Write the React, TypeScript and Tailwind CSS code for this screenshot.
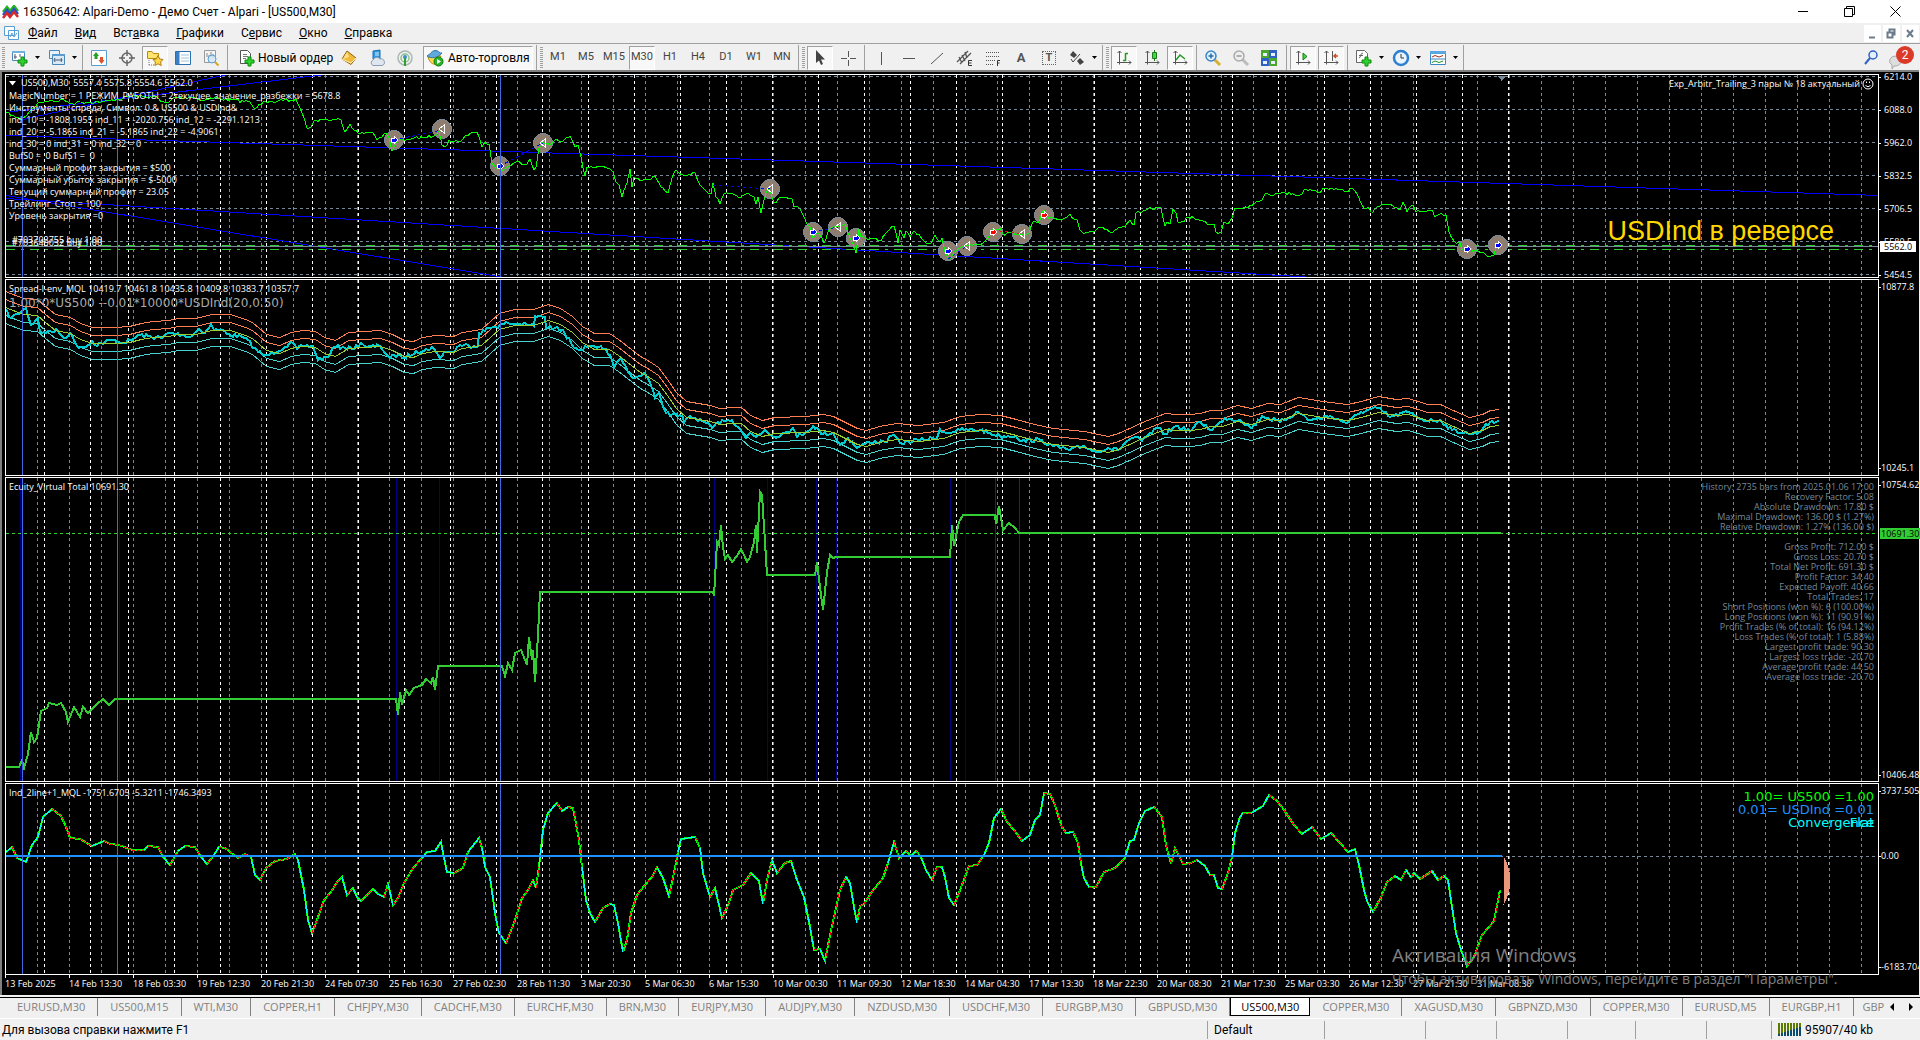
import { useState } from "react";
import type { ReactNode } from "react";
import { clsx } from "clsx";

type Point = [number, number];

const toPoints = (text: string): Point[] =>
  text
    .trim()
    .split(/\s+/)
    .map((pair) => pair.split(",").map(Number) as Point);

const toPath = (points: Point[], dy = 0) => "M" + points.map(([x, y]) => `${x} ${y + dy}`).join("L");

// Fills the gaps between the main quotes with small tick noise
const withTicks = (points: Point[], amount: number): Point[] => {
  let seed = 7;
  const random = () => {
    seed = (seed * 16807) % 2147483647;
    return seed / 2147483647 - 0.5;
  };
  const result: Point[] = [];
  points.forEach(([x, y], i) => {
    result.push([x, y]);
    const next = points[i + 1];
    if (!next) return;
    for (let step = x + 2; step < next[0] - 1; step += 2) {
      const t = (step - x) / (next[0] - x);
      result.push([step, y + (next[1] - y) * t + random() * amount]);
    }
  });
  return result;
};

const PRICE = toPoints(`
5,114 9,113 16,118 22,119 27,115 32,109 38,103 46,101 59,101 64,100 73,104 80,102 104,102 118,99 132,96 150,97 157,97 161,102 168,103 173,98 193,97 200,100 214,98 232,100 250,102
253,107 255,109 264,101 271,101 293,101 296,99 300,108 304,118 307,128 311,127 314,121 323,120 327,119 332,120 341,120 345,132 350,124 354,130 358,133 370,132 373,133 377,140 382,137
386,133 389,138 392,151 395,145 398,140 411,139 425,137 434,136 439,131 442,145 445,147 449,140 459,142 463,139 466,135 477,132 479,137 482,147 485,142 489,144 492,163 496,168 504,170
509,166 516,162 527,164 530,159 534,170 536,167 539,148 543,142 550,145 555,140 562,142 566,138 570,136 573,142 575,147 578,145 581,157 585,176 587,167 594,168 602,166 610,169 613,172
616,182 619,185 622,197 624,190 627,183 630,169 632,187 634,177 642,181 651,179 655,176 661,187 668,193 672,178 676,170 683,175 695,173 700,185 704,189 711,194 713,183 716,197 720,204
724,194 735,195 741,197 749,194 754,197 756,204 758,197 761,213 766,193 769,188 774,203 779,198 786,197 792,199 794,207 798,207 802,213 806,222 810,227 813,238 817,232 820,235 824,243
828,232 831,228 838,227 845,224 848,233 851,240 856,253 859,229 861,237 867,239 876,238 881,241 886,233 894,226 898,243 900,230 904,238 906,231 910,237 913,232 919,234 926,243 930,244
935,235 940,242 942,238 945,252 950,259 954,252 960,248 969,245 983,243 986,240 992,230 1000,228 1003,234 1013,233 1022,234 1029,233 1033,222 1038,223 1044,210 1047,217 1052,217
1061,220 1067,217 1070,214 1074,219 1077,220 1080,230 1084,234 1086,232 1095,231 1099,227 1113,232 1119,227 1125,227 1130,220 1134,225 1136,213 1141,213 1148,209 1161,208 1165,226
1167,222 1170,224 1173,209 1176,213 1178,222 1184,222 1186,218 1194,218 1203,221 1208,225 1214,224 1216,232 1221,232 1224,222 1228,224 1232,218 1235,208 1248,208 1255,203 1262,200
1265,194 1273,196 1276,193 1285,193 1300,195 1306,189 1314,190 1319,193 1323,188 1332,188 1344,191 1353,189 1359,198 1364,208 1368,207 1371,212 1380,206 1387,204 1394,207 1400,210
1403,202 1407,212 1413,205 1416,212 1432,210 1435,217 1441,213 1446,215 1449,232 1454,241 1460,243 1462,250 1469,247 1473,252 1478,251 1484,253 1488,257 1494,255 1496,247 1498,243`);

const ENVELOPE = toPoints(`
5,307 23,314 37,315 45,322 55,330 70,333 80,339 92,343 115,343 129,342 141,339 153,337 168,336 178,334 196,334 211,330 230,330 245,335 252,338 266,350 279,353 291,348 303,346 315,347
324,353 335,356 348,348 380,346 392,350 404,356 413,357 422,353 435,351 453,352 462,348 481,345 490,337 499,329 514,325 533,325 548,320 560,324 572,332 582,342 594,349 609,349 618,355
631,365 640,372 649,377 658,383 667,395 676,408 686,417 710,421 719,424 732,423 741,423 750,431 762,436 774,433 805,432 823,430 833,432 845,438 857,444 866,446 879,442 897,439 918,441
943,438 960,432 980,430 1000,431 1016,435 1034,440 1053,444 1084,447 1098,450 1108,452 1118,449 1127,445 1142,438 1157,432 1165,429 1176,430 1190,430 1200,429 1210,426 1222,426 1237,421
1251,424 1267,419 1280,420 1298,413 1322,417 1347,420 1361,417 1378,412 1396,415 1408,414 1427,420 1440,420 1455,427 1469,433 1482,430 1490,426 1499,425`);

const SPREAD = toPoints(`
5,310 11,318 18,314 26,308 31,325 38,318 40,332 58,331 64,338 70,333 77,346 86,347 92,341 95,345 113,340 122,343 132,340 138,335 162,338 168,333 184,335 190,337 199,329 205,333 211,324
214,330 223,330 227,334 242,337 248,340 254,348 263,355 268,355 285,347 293,343 297,349 303,346 313,346 318,360 328,357 334,347 343,347 352,349 361,343 367,347 380,346 390,358 398,355
404,358 416,351 422,352 432,347 440,358 444,352 453,352 460,345 478,346 479,333 490,328 508,323 530,325 534,326 535,316 545,317 546,328 557,327 563,330 572,345 579,350 588,347 597,348
606,349 612,360 614,368 621,358 628,372 635,378 644,373 649,380 655,398 659,393 666,413 683,417 684,423 690,416 704,422 712,428 722,420 732,420 741,430 746,438 750,433 756,437 765,430
774,437 784,433 793,428 797,437 805,433 813,426 823,434 833,433 840,445 848,438 857,448 869,442 885,442 894,435 900,443 918,440 937,438 940,429 946,433 960,430 980,430 1000,436
1016,436 1022,441 1040,440 1053,446 1070,450 1084,446 1096,452 1108,448 1118,450 1127,441 1135,437 1142,441 1157,428 1165,434 1176,426 1190,431 1200,422 1212,430 1225,418 1240,420
1252,428 1262,416 1280,422 1298,412 1310,420 1330,416 1347,423 1361,412 1378,408 1390,417 1408,412 1427,421 1440,420 1452,430 1469,434 1480,432 1486,424 1499,421`);

const EQUITY = toPoints(`
5,767 19,767 22,760 24,768 28,754 31,732 34,742 37,738 41,711 47,708 49,703 57,705 61,703 66,712 68,722 74,707 80,717 83,707 88,713 98,703 103,699 109,705 115,699 396,699 398,715 400,692
402,705 406,690 409,695 414,688 422,685 426,679 431,683 433,677 435,690 438,666 502,666 505,676 508,663 512,670 515,653 521,650 527,665 529,637 532,660 533,650 535,682 538,635 540,592
713,592 714,596 717,542 719,545 721,525 723,547 725,559 728,555 732,562 737,556 741,549 744,555 747,562 750,557 754,542 756,525 757,553 760,492 762,495 765,542 767,575 815,575 817,562
820,587 823,610 827,572 830,555 833,558 836,557 950,557 952,525 954,546 959,522 963,515 995,515 996,524 999,506 1003,530 1009,523 1015,528 1019,533 1501,533`);

const OSCILLATOR = toPoints(`
5,853 12,847 17,858 26,862 32,845 38,837 43,817 52,809 61,816 66,827 70,838 80,839 92,846 104,841 110,844 119,845 132,850 144,850 148,846 158,847 163,857 170,865 178,851 185,846 195,847
201,857 207,864 214,855 219,847 225,848 238,858 245,854 251,857 255,875 260,880 266,868 275,861 287,859 295,854 298,860 304,890 308,920 312,933 317,920 324,900 331,892 337,882 342,877
347,895 353,888 357,897 361,901 369,893 373,889 378,894 384,897 388,884 393,905 398,898 404,883 413,868 422,858 427,852 435,851 441,842 447,872 454,873 463,868 468,852 479,838 482,848
485,867 490,877 495,913 499,933 506,943 514,923 522,898 528,890 533,880 536,888 539,867 543,830 548,813 557,803 562,811 568,807 573,808 579,840 582,867 586,900 590,913 595,922 603,908
610,904 614,905 618,923 623,952 627,940 631,913 637,895 644,886 652,877 657,867 663,878 669,896 674,873 678,852 681,839 695,837 700,848 703,873 710,897 715,888 722,918 729,903 733,890
743,885 751,873 759,881 763,904 767,880 772,860 777,873 785,863 791,861 797,880 804,897 810,927 814,950 820,949 825,961 829,940 834,917 840,890 846,877 850,883 854,907 857,923 860,906
864,904 871,893 883,878 888,863 894,842 899,858 906,851 911,856 916,851 921,857 926,870 932,880 937,867 942,867 945,877 949,898 954,905 959,893 965,877 969,866 977,865 984,855 989,843
994,818 1001,809 1007,822 1014,830 1022,841 1030,835 1035,820 1040,815 1044,793 1050,794 1055,805 1061,825 1066,833 1073,832 1078,843 1081,863 1084,878 1089,887 1096,887 1104,872
1115,868 1125,858 1130,841 1134,840 1139,823 1145,811 1154,807 1162,817 1166,845 1171,864 1175,848 1183,864 1191,863 1197,860 1205,866 1210,875 1214,875 1218,888 1222,889 1228,873
1232,857 1235,833 1240,817 1243,813 1251,813 1263,806 1269,795 1277,801 1284,810 1294,825 1302,834 1312,827 1321,839 1331,833 1340,843 1348,852 1355,849 1359,865 1364,890 1367,901
1373,912 1381,897 1387,882 1395,876 1401,880 1406,870 1411,877 1414,873 1420,879 1432,871 1438,880 1444,876 1448,880 1452,907 1456,933 1461,950 1467,966 1474,957 1482,935 1494,921
1500,890`);

const ZERO = 856;

const range = (count: number) => Array.from({ length: count }, (_, i) => i);

const GRID_X = range(120).map((i) => 37 + 32 * i);
const DAY_X = [44, 90, ...range(31).map((i) => 128 + 46 * i)];
const MARKED_X = [22, 117, 500];

/* ---------- Chart panels ---------- */

type PanelProps = {
  className: string;
  top: number;
  grid?: number[];
  scale: ReactNode;
  drawing: ReactNode;
  children?: ReactNode;
};

function Panel({ className, top, grid = [], scale, drawing, children }: PanelProps) {
  return (
    <section className={clsx("flex shrink-0", className)}>
      <div className="relative min-w-0 flex-1 overflow-hidden border border-white">
        <svg className="absolute inset-0 size-full" fill="none" shapeRendering="crispEdges" aria-hidden="true">
          <g transform={`translate(-5.5 ${-top - 0.5})`}>
            <g stroke="#778899" strokeDasharray="3 3">
              {GRID_X.map((x) => (
                <path key={x} d={`M${x} ${top}V1200`} />
              ))}
              {grid.map((y) => (
                <path key={y} d={`M5 ${y}H4000`} />
              ))}
            </g>
            <g stroke="#fff" strokeDasharray="3 3">
              {DAY_X.map((x) => (
                <path key={x} d={`M${x} ${top}V1200`} />
              ))}
            </g>
            {drawing}
            <g stroke="#4169e1">
              {MARKED_X.map((x) => (
                <path key={x} d={`M${x} ${top}V1200`} />
              ))}
            </g>
          </g>
        </svg>
        {children}
      </div>
      <div className="relative w-10 shrink-0">{scale}</div>
    </section>
  );
}

function Label({ y, children }: { y: number; children: ReactNode }) {
  return (
    <div className="absolute left-0 flex h-3 items-center leading-3" style={{ top: y - 6 }}>
      <span className="h-px w-0.5 bg-white" />
      <span className="whitespace-nowrap">{children}</span>
    </div>
  );
}

type Marker = [number, number, "buy" | "sell" | "close"];

const MARKERS: Marker[] = [
  [394, 140, "buy"],
  [442, 129, "close"],
  [500, 166, "buy"],
  [543, 143, "close"],
  [770, 189, "close"],
  [813, 232, "buy"],
  [838, 227, "close"],
  [856, 238, "buy"],
  [948, 251, "buy"],
  [967, 246, "close"],
  [993, 232, "sell"],
  [1022, 234, "close"],
  [1044, 215, "sell"],
  [1467, 249, "buy"],
  [1498, 245, "buy"],
];

const COMMENT = [
  "MagicNumber = 1 РЕЖИМ_РАБОТЫ = 2текущее_значение_разбежки = 5678.8",
  "Инструменты спреда, Символ: 0 & US500 & USDInd&",
  "ind_10 = -1808.1955 ind_11 = -2020.756 ind_12 = -2291.1213",
  "ind_20 = -5.1865 ind_21 = -5.1865 ind_22 = -4.9061",
  "ind_30 = 0 ind_31 = 0 ind_32 = 0",
  "BufS0 =  0 BufS1 =  0",
  "Суммарный профит закрытия = $500",
  "Суммарный убыток закрытия = $-5000",
  "Текущий суммарный профит = 23.05",
  "Трейлинг_Стоп = 100",
  "Уровень закрытия =0",
];

function PricePanel() {
  const levels = ["6214.0", "6088.0", "5962.0", "5832.5", "5706.5", "5580.5", "5454.5"];

  return (
    <Panel
      className="basis-[204px]"
      top={74}
      grid={levels.map((_, i) => 76 + 33 * i)}
      scale={
        <>
          {levels.map((level, i) => (
            <Label key={level} y={3 + 33 * i}>
              <span className="pl-[3px]">{level}</span>
            </Label>
          ))}
          <div className="absolute top-[167px] left-px h-[11px] w-9 bg-white pl-1 leading-[11px] text-black">5562.0</div>
        </>
      }
      drawing={
        <>
          <g stroke="#0000ff">
            <path d="M5 112L325 74M22 119L227 74" />
            <path d="M5 135L1880 195" />
            <path d="M5 198L1313 277" />
            <path d="M5 195L505 277" />
          </g>
          <path d="M5 246H4000" stroke="#778899" />
          <path d="M5 245H4000M5 249H4000" stroke="#32cd32" strokeDasharray="9 6 3 6" />
          <g transform="translate(-.5 -.5)">
            {MARKERS.map(([x, y]) => (
              <circle key={x} cx={x} cy={y} r="9.5" fill="#8f7d70" stroke="#778899" />
            ))}
            <path d={toPath(withTicks(PRICE, 3))} stroke="#00ff00" />
            <path
              d="M394 140L442 130M500 166L543 143M713 185L770 189M813 232L838 227M948 259L967 246"
              stroke="#0000ff"
              strokeDasharray="3 3"
            />
            <path d="M993 230L1022 234" stroke="#ff0000" strokeDasharray="3 3" />
            {MARKERS.map(([x, y, kind]) =>
              kind === "close" ? (
                <path key={x} d={`M${x - 3} ${y}L${x + 2} ${y - 4}V${y + 4}Z`} stroke="#fff" />
              ) : (
                <path
                  key={x}
                  d={`M${x - 3} ${y - 2}H${x}V${y - 4}L${x + 4} ${y}L${x} ${y + 4}V${y + 2}H${x - 3}Z`}
                  fill={kind === "buy" ? "#0000ff" : "#ff0000"}
                  stroke="#fff"
                />
              )
            )}
          </g>
          <path d="M1497 75H1506L1501 80Z" fill="#778899" />
        </>
      }
    >
      <div className="absolute top-0.5 left-0.5 flex h-3 items-center gap-1 leading-3 whitespace-pre">
        <svg width="9" height="5" aria-hidden="true">
          <path d="M1 0H8L4.500 4.500Z" fill="#fff" />
        </svg>
        <span>US500,M30  5557.4 5575.8 5554.6 5562.0</span>
      </div>
      <div className="absolute top-[15px] left-[3px] leading-3 whitespace-pre">
        {COMMENT.map((line) => (
          <p key={line}>{line}</p>
        ))}
      </div>
      <div className="absolute top-[159px] left-1.5 leading-3">#703702755 buy 1.00</div>
      <div className="absolute top-[162px] left-1.5 leading-3">#703640032 buy 1.00</div>
      <div className="absolute top-[3px] right-1 flex items-center gap-0.5 leading-3">
        <span>Exp_Arbitr_Trailing_3 пары № 18 актуальный</span>
        <svg width="12" height="12" fill="none" stroke="#fff" aria-hidden="true">
          <circle cx="6" cy="6" r="5" />
          <path d="M3.500 7.500Q6 10 8.500 7.500M4.500 3.500V5M7.500 3.500V5" />
        </svg>
      </div>
      <div className="absolute right-11 top-[142px] font-['Liberation_Sans'] text-[27px] leading-7 whitespace-nowrap text-[#ffd700]">
        USDInd в реверсе
      </div>
    </Panel>
  );
}

function SpreadPanel() {
  return (
    <Panel
      className="basis-[197px]"
      top={279}
      scale={
        <>
          <Label y={8}>10877.8</Label>
          <Label y={189}>10245.1</Label>
        </>
      }
      drawing={
        <>
          <path d={toPath(ENVELOPE, -16)} stroke="#ff7f50" />
          <path d={toPath(ENVELOPE, -8)} stroke="#ff7f50" />
          <path d={toPath(ENVELOPE, 8)} stroke="#48d1cc" />
          <path d={toPath(ENVELOPE, 16)} stroke="#48d1cc" />
          <path d={toPath(withTicks(SPREAD, 4))} stroke="#00ced1" strokeWidth="2" transform="translate(-.5 -.5)" />
          <path d={toPath(ENVELOPE)} stroke="#9acd32" />
        </>
      }
    >
      <div className="absolute top-[3px] left-[3px] leading-3">
        Spread-I-env_MQL 10419.7 10461.8 10435.8 10409.8 10383.7 10357.7
      </div>
      <div className="absolute top-4 left-[3px] font-['DejaVu_Sans'] text-xs leading-[14px] text-[#a9a9a9]">
        1.00*0*US500 --0.01*10000*USDInd(20,0.50)
      </div>
    </Panel>
  );
}

const REPORT = [
  "History: 2735 bars from 2025.01.06 17:00",
  "Recovery Factor: 5.08",
  "Absolute Drawdown: 17.80 $",
  "Maximal Drawdown: 136.00 $ (1.27%)",
  "Relative Drawdown: 1.27% (136.00 $)",
  "",
  "Gross Profit: 712.00 $",
  "Gross Loss: 20.70 $",
  "Total Net Profit: 691.30 $",
  "Profit Factor: 34.40",
  "Expected Payoff: 40.66",
  "Total Trades: 17",
  "Short Positions (won %): 6 (100.00%)",
  "Long Positions (won %): 11 (90.91%)",
  "Profit Trades (% of total): 16 (94.12%)",
  "Loss Trades (% of total): 1 (5.88%)",
  "Largest profit trade: 90.30",
  "Largest loss trade: -20.70",
  "Average profit trade: 44.50",
  "Average loss trade: -20.70",
];

function EquityPanel() {
  return (
    <Panel
      className="grow basis-[305px]"
      top={477}
      scale={
        <>
          <Label y={8}>10754.62</Label>
          <Label y={298}>10406.48</Label>
          <div className="absolute top-[51px] left-px h-[11px] w-10 bg-[#32cd32] pl-px leading-[11px] text-black">10691.30</div>
        </>
      }
      drawing={
        <>
          <g stroke="#000080">
            {[20, 119, 396, 439, 714, 767, 816, 836, 950, 965].map((x) => (
              <path key={x} d={`M${x} 477V790`} />
            ))}
          </g>
          <path d="M995 477V790M1019 477V790" stroke="#8b0000" />
          <path d="M5 533H4000" stroke="#32cd32" strokeDasharray="3 3" />
          <path d={toPath(EQUITY)} stroke="#32cd32" strokeWidth="2" transform="translate(-.5 -.5)" />
        </>
      }
    >
      <div className="absolute top-[3px] left-[3px] leading-3">Ecuity_Virtual Total 10691.30</div>
      <div className="absolute top-1 right-1 text-right text-[#778899]">
        {REPORT.map((line, i) => (
          <p key={i} className="h-2.5 leading-[10px]">
            {line}
          </p>
        ))}
      </div>
    </Panel>
  );
}

function OscillatorPanel() {
  // Red while the line returns to zero, aqua while it moves away
  let away = "";
  let back = "";
  OSCILLATOR.slice(1).forEach(([x, y], i) => {
    const [px, py] = OSCILLATOR[i];
    const segment = `M${px} ${py}L${x} ${y}`;
    if (Math.abs(y - ZERO) > Math.abs(py - ZERO)) away += segment;
    else back += segment;
  });

  return (
    <Panel
      className="basis-[192px]"
      top={783}
      grid={[ZERO]}
      scale={
        <>
          <Label y={8}>3737.505</Label>
          <Label y={73}>0.00</Label>
          <Label y={184}>-6183.704</Label>
        </>
      }
      drawing={
        <>
          <path d="M1503 856Q1517 880 1503 904Z" fill="#e9967a" />
          <g transform="translate(-.5 -.5)">
            <path d={toPath(OSCILLATOR)} stroke="#00ff00" strokeWidth="2" />
            <path d={away} stroke="#00ffff" />
            <path d={back} stroke="#ff0000" strokeDasharray="3 2" />
            <path d="M5 856H1502" stroke="#1e90ff" strokeWidth="2" />
          </g>
        </>
      }
    >
      <div className="absolute top-[3px] left-[3px] leading-3">Ind_2line+1_MQL -1751.6705 -5.3211 -1746.3493</div>
      <div className="absolute top-1.5 right-1 text-right font-['DejaVu_Sans'] text-[13px] leading-[13px]">
        <p className="text-[#00ff00]">1.00= US500 =1.00</p>
        <p className="text-[#1e90ff]">0.01= USDInd =0.01</p>
        <p className="text-[#00ffff]">Convergence</p>
        <p className="absolute right-0 bottom-0 text-[#00ffff]">Flat</p>
      </div>
    </Panel>
  );
}

const TIMES = [
  "13 Feb 2025",
  "14 Feb 13:30",
  "18 Feb 03:30",
  "19 Feb 12:30",
  "20 Feb 21:30",
  "24 Feb 07:30",
  "25 Feb 16:30",
  "27 Feb 02:30",
  "28 Feb 11:30",
  "3 Mar 20:30",
  "5 Mar 06:30",
  "6 Mar 15:30",
  "10 Mar 00:30",
  "11 Mar 09:30",
  "12 Mar 18:30",
  "14 Mar 04:30",
  "17 Mar 13:30",
  "18 Mar 22:30",
  "20 Mar 08:30",
  "21 Mar 17:30",
  "25 Mar 03:30",
  "26 Mar 12:30",
  "27 Mar 21:30",
  "31 Mar 08:30",
];

function TimeAxis() {
  return (
    <div className="-mt-px flex h-5 overflow-hidden">
      {TIMES.map((time) => (
        <div key={time} className="w-16 shrink-0 whitespace-nowrap">
          <div className="h-[3px] w-px bg-white" />
          <div className="leading-3">{time}</div>
        </div>
      ))}
    </div>
  );
}

/* ---------- Toolbar ---------- */

function Icon({ children }: { children: ReactNode }) {
  return (
    <svg width="18" height="18" viewBox="0 0 18 18" fill="none" className="shrink-0" aria-hidden="true">
      {children}
    </svg>
  );
}

const PLUS = <path d="M10 8H13V11H16V14H13V17H10V14H7V11H10Z" fill="#2fd12f" stroke="#0a8a0a" />;

const AXES = <path d="M4.500 2V15.500M2 13.500H16M2.500 4L4.500 2L6.500 4M14 11.500L16 13.500L14 15.500" stroke="#555" />;

const icons = {
  newChart: (
    <Icon>
      <path d="M1.500 2.500H13.500V11.500H1.500Z" fill="#fff" stroke="#4a86b8" />
      <path d="M1 3H14" stroke="#6fb1dd" strokeWidth="2" />
      <path d="M4 5V10M3 8H6M9 5V8" stroke="#557" />
      {PLUS}
    </Icon>
  ),
  profiles: (
    <Icon>
      <path d="M1.500 1.500H11.500V9.500H1.500Z" fill="#e6f1fa" stroke="#4a86b8" />
      <path d="M4.500 5.500H16.500V15.500H4.500Z" fill="#dbe9f5" stroke="#4a86b8" />
      <path d="M4 6H17" stroke="#5b9bd0" strokeWidth="2" />
      <path d="M7 11H14M7 9L6 11L7 13M13 9L14 11L13 13" stroke="#456" />
    </Icon>
  ),
  market: (
    <Icon>
      <path d="M1.500 1.500H16.500V16.500H1.500Z" fill="#fff" stroke="#5a9fd4" />
      <path d="M6 3L9 7H7.500V10H4.500V7H3Z" fill="#22a022" />
      <path d="M11.500 15L8.500 11H10V8H13V11H14.500Z" fill="#e0522a" />
    </Icon>
  ),
  target: (
    <Icon>
      <circle cx="9" cy="9" r="5" stroke="#666" strokeWidth="1.500" />
      <path d="M9 1V7M9 11V17M1 9H7M11 9H17" stroke="#666" strokeWidth="1.500" />
    </Icon>
  ),
  navigator: (
    <Icon>
      <path d="M1.500 2.500H6L7.500 4.500H12.500V9.500H1.500Z" fill="#ffe46b" stroke="#b88a10" />
      <path d="M3 11V16M3 16H8" stroke="#777" strokeDasharray="1 1" />
      <path d="M12 6.500L13.700 10L17 10.500L14.600 13L15.200 16.500L12 14.800L8.800 16.500L9.400 13L7 10.500L10.300 10Z" fill="#ffd84a" stroke="#b07d10" />
    </Icon>
  ),
  terminal: (
    <Icon>
      <path d="M1.500 2.500H16.500V15.500H1.500Z" fill="#fff" stroke="#2b6fb0" />
      <path d="M2 3H5.500V15H2Z" fill="#3b7fc4" />
      <path d="M7 6H15M7 9H15M7 12H15" stroke="#9ec3e0" />
    </Icon>
  ),
  tester: (
    <Icon>
      <path d="M2.500 1.500H13.500V13.500H2.500Z" fill="#f4f4f4" stroke="#999" />
      <path d="M5 4V8M7 6V10M9 3V8M11 5V9" stroke="#888" />
      <circle cx="10" cy="10" r="4" fill="#cfe6f8" fillOpacity=".8" stroke="#5a9fd4" />
      <path d="M13 13L16.500 16.500" stroke="#d9a520" strokeWidth="2" />
    </Icon>
  ),
  order: (
    <Icon>
      <path d="M2.500 1.500H9.500L12.500 4.500V14.500H2.500Z" fill="#fff" stroke="#555" />
      <path d="M5 5.500H9M5 7.500H10M5 9.500H8" stroke="#777" />
      {PLUS}
    </Icon>
  ),
  editor: (
    <Icon>
      <path d="M7 2L16 9L11 15.500L2 10Z" fill="#f0b93a" stroke="#94650c" />
      <path d="M2 10L11 14L16 9" stroke="#fff3c0" />
      <path d="M7 3L9 8L3 10" fill="#ffe08a" />
    </Icon>
  ),
  hosting: (
    <Icon>
      <path d="M5 2L12 1V10H5Z" fill="#2f9ae0" stroke="#1a6fb0" />
      <path d="M7 4H11M7 6H11" stroke="#d4edff" />
      <path d="M5 16.500A3 3 0 0 1 5 11A4 4 0 0 1 12 10A3 3 0 0 1 14 16.500Z" fill="#dfe6ef" stroke="#8a9bb5" />
    </Icon>
  ),
  signals: (
    <Icon>
      <circle cx="9" cy="9" r="7" stroke="#a9b8b0" strokeWidth="1.500" />
      <circle cx="9" cy="9" r="4" stroke="#8fc08f" strokeWidth="1.500" />
      <circle cx="9" cy="8" r="2" fill="#3d8fd1" />
      <path d="M9 9V17" stroke="#2fa02f" strokeWidth="2" />
    </Icon>
  ),
  expert: (
    <Icon>
      <path d="M2 8C4 15 8 16 12 15L15 7Z" fill="#ffd84a" stroke="#b88a10" />
      <path d="M1 7C5 10 12 9 16 4C13 5 13 1 9 1.500C5 2 5 5 1 7Z" fill="#5fa9dc" stroke="#2f76ac" />
      <circle cx="12.500" cy="12.500" r="4.500" fill="#27b327" stroke="#0e7a0e" />
      <path d="M11 10L15 12.500L11 15Z" fill="#fff" />
    </Icon>
  ),
  cursor: (
    <Icon>
      <path d="M5 1V14L8 11.500L10 16L12 15L10 10.500H14Z" fill="#444" />
    </Icon>
  ),
  crosshair: (
    <Icon>
      <path d="M9.500 2V8M9.500 11V17M2 9.500H8M11 9.500H17" stroke="#555" />
    </Icon>
  ),
  vertical: (
    <Icon>
      <path d="M9.500 3V16" stroke="#555" />
    </Icon>
  ),
  horizontal: (
    <Icon>
      <path d="M3 9.500H15" stroke="#555" />
    </Icon>
  ),
  trend: (
    <Icon>
      <path d="M3 15L15 4" stroke="#555" />
    </Icon>
  ),
  channel: (
    <Icon>
      <path d="M1 13L12 2M4 15L15 4M3 8L6 14M6 6L9 12M9 3L11 9" stroke="#555" strokeWidth="1.300" />
      <path d="M16 11.500H12.500V16.500H16M12.500 14H15.500" stroke="#333" />
    </Icon>
  ),
  fibo: (
    <Icon>
      <path d="M2 3.500H16M2 7.500H16M2 11.500H11M2 15.500H10" stroke="#555" strokeDasharray="1 1" />
      <path d="M16 11.500H13.500V17M13.500 14H15.500" stroke="#333" />
    </Icon>
  ),
  letter: <span className="text-[13px] font-bold text-[#555]">A</span>,
  label: <span className="border border-dotted border-[#666] px-[3px] text-[11px] leading-3 font-bold text-[#555]">T</span>,
  arrows: (
    <Icon>
      <path d="M5 2L9 6L6 9L2 6Z" fill="#444" />
      <path d="M12 9L16 13L12 16L9 12Z" fill="#444" />
      <path d="M3 10L5 13L12 5" stroke="#444" />
    </Icon>
  ),
  bars: (
    <Icon>
      {AXES}
      <path d="M10.500 4V12M10.500 4.500H13M8 11.500H10.500" stroke="#1f9a1f" strokeWidth="1.500" />
    </Icon>
  ),
  candles: (
    <Icon>
      {AXES}
      <path d="M11.500 1V12" stroke="#1f7a1f" />
      <path d="M9.500 3.500H13.500V9.500H9.500Z" fill="#3fd83f" stroke="#1f7a1f" />
    </Icon>
  ),
  line: (
    <Icon>
      {AXES}
      <path d="M5 11L9 6L14 10" stroke="#1f9a1f" strokeWidth="1.500" />
    </Icon>
  ),
  zoomIn: (
    <Icon>
      <path d="M10 10L16 16" stroke="#d9b030" strokeWidth="3" />
      <circle cx="7" cy="7" r="5" fill="#dff0ff" stroke="#3a86c8" strokeWidth="1.500" />
      <path d="M7 4.500V9.500M4.500 7H9.500" stroke="#2a6aa8" strokeWidth="1.500" />
    </Icon>
  ),
  zoomOut: (
    <Icon>
      <path d="M10 10L16 16" stroke="#bbb" strokeWidth="3" />
      <circle cx="7" cy="7" r="5" fill="#eee" stroke="#aaa" strokeWidth="1.500" />
      <path d="M4.500 7H9.500" stroke="#999" strokeWidth="1.500" />
    </Icon>
  ),
  tile: (
    <Icon>
      <path d="M1 1H9V9H1ZM9 9H17V17H9Z" fill="#4ba82e" />
      <path d="M9 1H17V9H9ZM1 9H9V17H1Z" fill="#2f62c4" />
      <path d="M3 4H7V7H3ZM11 4H15V7H11ZM3 12H7V15H3ZM11 12H15V15H11Z" fill="#e8f0ff" />
    </Icon>
  ),
  scroll: (
    <Icon>
      {AXES}
      <path d="M9 4L13 7.500L9 11Z" fill="#3fd83f" stroke="#1f7a1f" />
    </Icon>
  ),
  shift: (
    <Icon>
      {AXES}
      <path d="M10.500 2V12" stroke="#555" />
      <path d="M16 7H12M14 5L12 7L14 9" stroke="#c8501e" strokeWidth="1.500" />
    </Icon>
  ),
  indicators: (
    <Icon>
      <path d="M1.500 1.500H9.500L12.500 4.500V13.500H1.500Z" fill="#fff" stroke="#666" />
      <path d="M4 9C6 9 5 4 8 4M4 6.500H8" stroke="#666" />
      {PLUS}
    </Icon>
  ),
  periods: (
    <Icon>
      <circle cx="9" cy="9" r="7" fill="#eaf5ff" stroke="#2f7fd0" strokeWidth="2.500" />
      <path d="M9 5V9H12" stroke="#333" />
    </Icon>
  ),
  templates: (
    <Icon>
      <path d="M1.500 2.500H16.500V15.500H1.500Z" fill="#fff" stroke="#3a86c8" />
      <path d="M1 3.500H17" stroke="#5aa6e0" strokeWidth="3" />
      <path d="M3 8L6 6.500L10 8L14 6.500" stroke="#a03020" />
      <path d="M2 10H16" stroke="#3a86c8" />
      <path d="M3 13.500L6 12L10 13.500L14 12" stroke="#1f9a1f" />
    </Icon>
  ),
};

type ToolProps = { icon: ReactNode; label: string; pressed?: boolean; menu?: boolean };

function Tool({ icon, label, pressed, menu }: ToolProps) {
  return (
    <button type="button" aria-label={label} className="flex h-6 shrink-0 items-center">
      <span
        className={clsx(
          "mx-px flex h-6 w-[26px] items-center justify-center",
          pressed && "border border-white border-t-[#a0a0a0] border-l-[#a0a0a0] bg-[#f8f8f8]"
        )}
      >
        {icon}
      </span>
      {menu && (
        <svg width="9" height="4" aria-hidden="true">
          <path d="M1 0H6L3.500 3Z" fill="#000" />
        </svg>
      )}
    </button>
  );
}

const Divider = () => <div className="mx-0.5 h-[26px] w-px shrink-0 bg-[#a0a0a0]" />;

const Grip = () => (
  <div className="mx-px h-[22px] w-[3px] shrink-0 bg-[repeating-linear-gradient(#a0a0a0_0_1px,transparent_1px_2px)]" />
);

function Toolbar() {
  const [frame, setFrame] = useState("M30");

  return (
    <div className="flex h-[27px] items-center overflow-hidden border-t border-[#a0a0a0] bg-[#f0f0f0] pt-px pl-px">
      <Grip />
      <Tool icon={icons.newChart} label="Новый график" menu />
      <Tool icon={icons.profiles} label="Профили" menu />
      <Divider />
      <Tool icon={icons.market} label="Обзор рынка" />
      <Tool icon={icons.target} label="Окно данных" />
      <Tool icon={icons.navigator} label="Навигатор" pressed />
      <Tool icon={icons.terminal} label="Терминал" />
      <Tool icon={icons.tester} label="Тестер стратегий" />
      <Divider />
      <button type="button" className="flex h-6 w-[105px] shrink-0 items-center gap-0.5 pl-2 text-xs whitespace-nowrap">
        {icons.order}
        Новый ордер
      </button>
      <Tool icon={icons.editor} label="Редактор" />
      <Tool icon={icons.hosting} label="Хостинг" />
      <Tool icon={icons.signals} label="Сигналы" />
      <button
        type="button"
        className="mr-px ml-1 flex h-6 w-[110px] shrink-0 items-center gap-1 border border-white border-t-[#a0a0a0] border-l-[#a0a0a0] bg-[#f8f8f8] pl-0.5 text-xs whitespace-nowrap"
      >
        {icons.expert}
        Авто-торговля
      </button>
      <Divider />
      <Grip />
      {["M1", "M5", "M15", "M30", "H1", "H4", "D1", "W1", "MN"].map((name) => (
        <button
          key={name}
          type="button"
          onClick={() => setFrame(name)}
          className={clsx(
            "mx-px h-6 w-[26px] shrink-0 text-center text-[11px] text-[#444]",
            name === frame && "border border-white border-t-[#a0a0a0] border-l-[#a0a0a0] bg-[#f8f8f8]"
          )}
        >
          {name}
        </button>
      ))}
      <Divider />
      <Grip />
      <Tool icon={icons.cursor} label="Курсор" pressed />
      <Tool icon={icons.crosshair} label="Перекрестие" />
      <Divider />
      <Tool icon={icons.vertical} label="Вертикальная линия" />
      <Tool icon={icons.horizontal} label="Горизонтальная линия" />
      <Tool icon={icons.trend} label="Трендовая линия" />
      <Tool icon={icons.channel} label="Канал" />
      <Tool icon={icons.fibo} label="Фибоначчи" />
      <Tool icon={icons.letter} label="Текст" />
      <Tool icon={icons.label} label="Метка" />
      <Tool icon={icons.arrows} label="Стрелки" menu />
      <Divider />
      <Grip />
      <Tool icon={icons.bars} label="Бары" pressed />
      <Tool icon={icons.candles} label="Свечи" />
      <Tool icon={icons.line} label="Линия" pressed />
      <Divider />
      <Tool icon={icons.zoomIn} label="Увеличить" />
      <Tool icon={icons.zoomOut} label="Уменьшить" />
      <Tool icon={icons.tile} label="Окна мозаикой" />
      <div className="ml-px flex shrink-0 items-center">
        <Divider />
        <Tool icon={icons.scroll} label="Автопрокрутка" pressed />
        <Tool icon={icons.shift} label="Сдвиг графика" pressed />
        <Divider />
        <Tool icon={icons.indicators} label="Индикаторы" menu />
        <Tool icon={icons.periods} label="Периоды" menu />
        <Tool icon={icons.templates} label="Шаблоны" menu />
        <Divider />
      </div>
      <button type="button" aria-label="Поиск" className="mr-2 ml-auto shrink-0">
        <Icon>
          <circle cx="11" cy="6" r="4" fill="#e4f0ff" stroke="#2f62c4" strokeWidth="1.500" />
          <path d="M8 9L3 15" stroke="#2f62c4" strokeWidth="2" />
        </Icon>
      </button>
      <button type="button" aria-label="Сообщения" className="relative mr-1 flex h-6 w-7 shrink-0 items-end">
        <svg width="16" height="16" aria-hidden="true">
          <path d="M8 2A6 5 0 1 1 6 12L4 15V11A6 5 0 0 1 8 2Z" fill="#ddd" stroke="#aaa" />
        </svg>
        <span className="absolute top-0 right-0.5 size-[18px] rounded-full bg-[#dc3a28] text-center text-xs leading-[18px] text-white">
          2
        </span>
      </button>
    </div>
  );
}

/* ---------- Window ---------- */

const MENU = [
  ["", "Ф", "айл"],
  ["", "В", "ид"],
  ["Вст", "а", "вка"],
  ["", "Г", "рафики"],
  ["С", "е", "рвис"],
  ["", "О", "кно"],
  ["", "С", "правка"],
];

function Header() {
  return (
    <header>
      <div className="flex h-[23px] items-center bg-white pl-0.5 text-xs">
        <svg width="17" height="14" fill="none" strokeWidth="2.500" aria-hidden="true">
          <path d="M1 7L5 2L8 6L12 1L16 6" stroke="#22b322" />
          <path d="M1 10L5 5L8 9L12 4L16 9" stroke="#2a4fc8" />
          <path d="M1 13L5 8L8 12L12 7L16 12" stroke="#d42a2a" />
        </svg>
        <h1 className="ml-1 whitespace-nowrap">16350642: Alpari-Demo - Демо Счет - Alpari - [US500,M30]</h1>
        <div className="mr-0.5 ml-auto flex">
          <button type="button" aria-label="Свернуть" className="flex w-[46px] justify-center">
            <svg width="11" height="11" stroke="#000">
              <path d="M0 5.500H10" />
            </svg>
          </button>
          <button type="button" aria-label="Восстановить" className="flex w-[46px] justify-center">
            <svg width="11" height="11" fill="none" stroke="#000">
              <path d="M.5 2.500H8.500V10.500H.5ZM2.500 2.500V.5H10.500V8.500H8.500" />
            </svg>
          </button>
          <button type="button" aria-label="Закрыть" className="flex w-[46px] justify-center">
            <svg width="11" height="11" stroke="#000">
              <path d="M.5 .5L10.500 10.500M10.500 .5L.5 10.500" />
            </svg>
          </button>
        </div>
      </div>
      <div className="flex h-5 items-center bg-[#f0f0f0] pl-1 text-xs">
        <svg width="16" height="16" fill="#fff" stroke="#5a9fd4" aria-hidden="true">
          <path d="M.5 1.500H10.500V10.500H.5ZM4.500 5.500H14.500V14.500H4.500Z" />
          <path d="M6 12L8 8L10 12L13 8" fill="none" />
        </svg>
        <nav className="ml-2 flex gap-[17px]">
          {MENU.map(([before, key, after]) => (
            <button key={before + key + after} type="button">
              {before}
              <u>{key}</u>
              {after}
            </button>
          ))}
        </nav>
        <div className="ml-auto flex gap-0.5 pr-px">
          {["M5 12.500H11", "M4.500 7.500H9.500V12.500H4.500ZM6.500 7V4.500H11.500V9.500H10", "M5 5L11 12M11 5L5 12"].map((d) => (
            <button key={d} type="button" aria-label="Окно графика" className="h-[17px] w-[17px] bg-white">
              <svg width="17" height="17" fill="none" stroke="#6b7b8c" strokeWidth="2">
                <path d={d} />
              </svg>
            </button>
          ))}
        </div>
      </div>
      <Toolbar />
    </header>
  );
}

const TABS = [
  "EURUSD,M30",
  "US500,M15",
  "WTI,M30",
  "COPPER,H1",
  "CHFJPY,M30",
  "CADCHF,M30",
  "EURCHF,M30",
  "BRN,M30",
  "EURJPY,M30",
  "AUDJPY,M30",
  "NZDUSD,M30",
  "USDCHF,M30",
  "EURGBP,M30",
  "GBPUSD,M30",
  "US500,M30",
  "COPPER,M30",
  "XAGUSD,M30",
  "GBPNZD,M30",
  "COPPER,M30",
  "EURUSD,M5",
  "EURGBP,H1",
  "GBP",
];

function ChartTabs() {
  const [active, setActive] = useState(14);

  return (
    <div className="mt-0.5 flex h-[21px] items-start border-t border-black bg-[#f0f0f0] font-['Open_Sans','Noto_Sans',sans-serif] text-[11px] text-[#808080]">
      <div className="flex min-w-0 flex-1 overflow-hidden pl-[5px]">
        {TABS.map((tab, i) => (
          <button
            key={i}
            type="button"
            onClick={() => setActive(i)}
            className={clsx(
              "h-[18px] shrink-0 leading-4",
              i === active && "border border-t-0 border-black bg-white px-2.5 text-black",
              i !== active && i < TABS.length - 1 && "border-r border-r-[#808080] px-3",
              i === TABS.length - 1 && "px-2"
            )}
          >
            {tab}
          </button>
        ))}
      </div>
      <div className="flex h-[18px] w-[30px] items-center justify-between pr-1.5">
        <button type="button" aria-label="Назад">
          <svg width="5" height="8">
            <path d="M4 0V8L0 4Z" />
          </svg>
        </button>
        <button type="button" aria-label="Вперед">
          <svg width="5" height="8">
            <path d="M0 0V8L4 4Z" />
          </svg>
        </button>
      </div>
    </div>
  );
}

function StatusBar() {
  return (
    <footer className="flex h-[22px] items-center border-t border-white bg-[#f0f0f0] text-xs">
      <p className="flex-1 pl-0.5">Для вызова справки нажмите F1</p>
      <p className="h-[18px] w-[117px] border-l border-[#a0a0a0] pl-1.5 leading-[18px]">Default</p>
      <span className="h-[18px] w-[101px] border-l border-[#a0a0a0]" />
      <span className="h-[18px] w-[71px] border-l border-[#a0a0a0]" />
      <span className="h-[18px] w-[71px] border-l border-[#a0a0a0]" />
      <span className="h-[18px] w-[68px] border-l border-[#a0a0a0]" />
      <span className="h-[18px] w-[71px] border-l border-[#a0a0a0]" />
      <span className="h-[18px] w-[65px] border-l border-[#a0a0a0]" />
      <div className="flex h-[18px] w-[149px] items-center gap-1 border-l border-[#a0a0a0] pl-1.5">
        <svg width="23" height="13" strokeWidth="2" aria-hidden="true">
          {range(8).map((i) => (
            <g key={i}>
              <path d={`M${1 + 3 * i} 0V13`} stroke="#5c7a00" />
              <path d={`M${1 + 3 * i} ${11 - i}V13`} stroke="#0a4a6a" />
            </g>
          ))}
        </svg>
        95907/40 kb
      </div>
    </footer>
  );
}

export default function App() {
  return (
    <div className="flex min-h-screen flex-col bg-[#f0f0f0] font-['Roboto','Noto_Sans',sans-serif] text-black">
      <Header />
      <main className="relative mr-px flex grow flex-col gap-px border-t-2 border-l-2 border-t-[#808080] border-l-[#808080] bg-black pt-0.5 pl-[3px] font-['Open_Sans','Noto_Sans',sans-serif] text-[9px] text-white">
        <PricePanel />
        <SpreadPanel />
        <EquityPanel />
        <OscillatorPanel />
        <TimeAxis />
        <div className="absolute right-[72px] bottom-1.5 w-[455px] whitespace-nowrap text-[#808080]">
          <p className="text-[19px] leading-7">Активация Windows</p>
          <p className="text-sm leading-5">Чтобы активировать Windows, перейдите в раздел "Параметры".</p>
        </div>
      </main>
      <ChartTabs />
      <StatusBar />
    </div>
  );
}
